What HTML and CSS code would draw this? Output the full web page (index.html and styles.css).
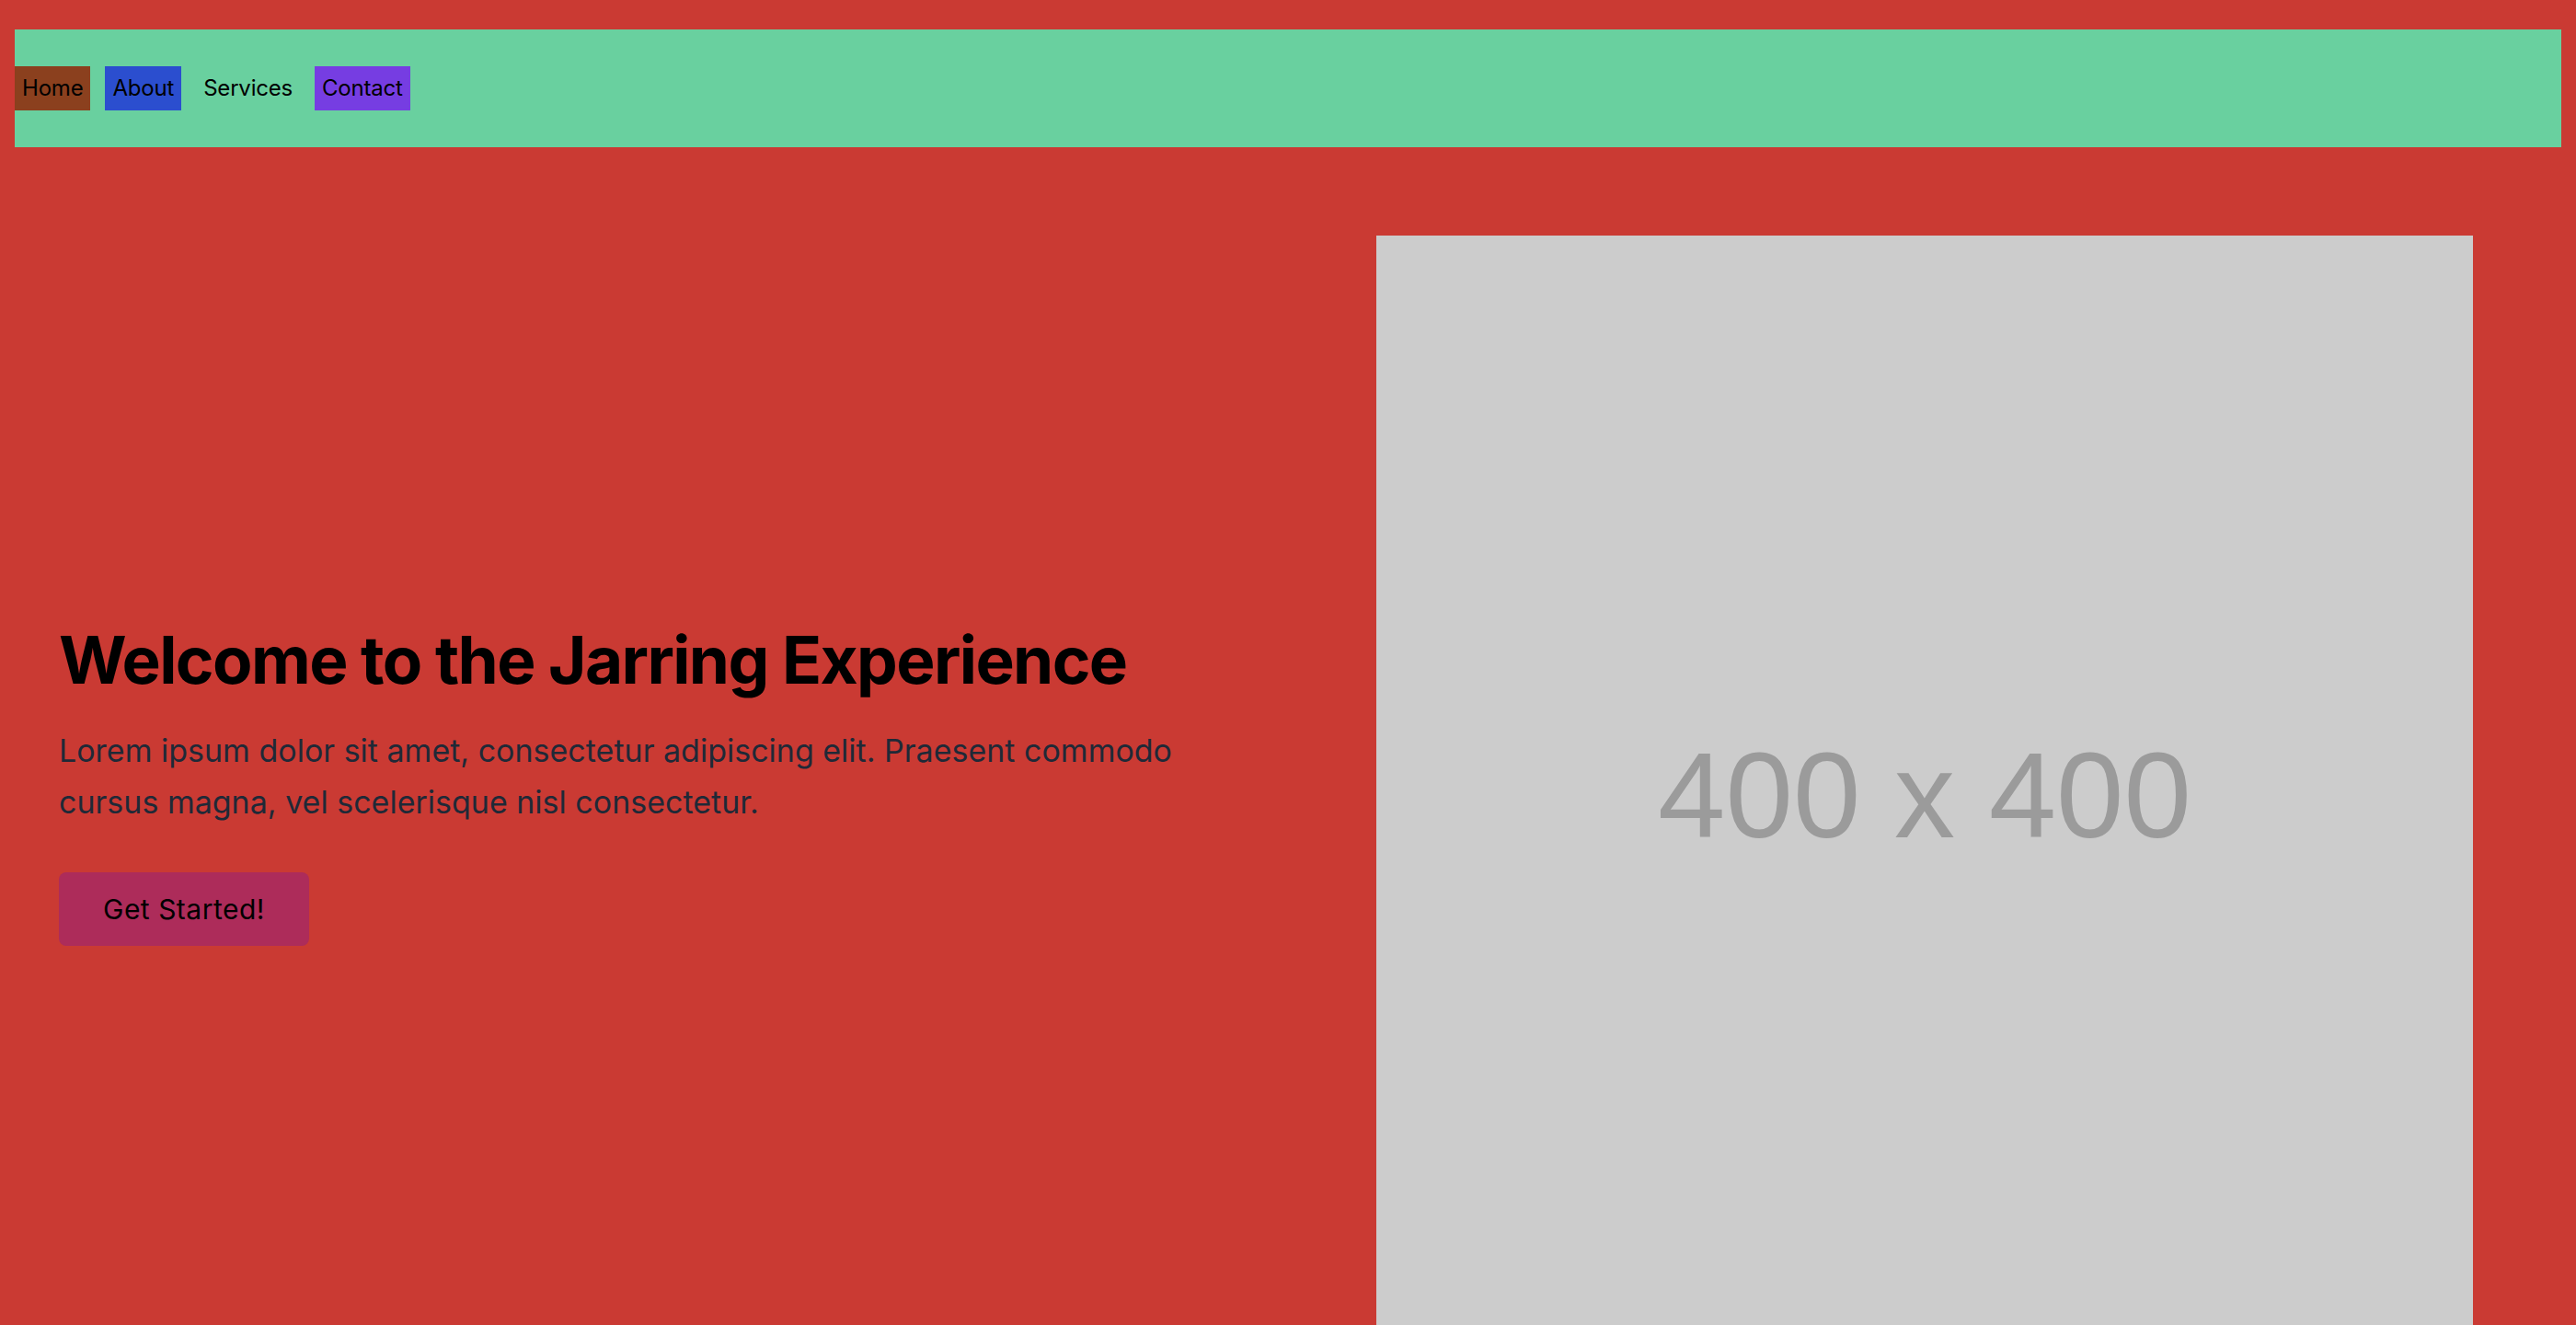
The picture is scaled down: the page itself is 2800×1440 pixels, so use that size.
FILE: index.html
```html
<!DOCTYPE html>
<html lang="en">
<head>
<meta charset="utf-8">
<title>Jarring Experience</title>
<link rel="stylesheet" href="styles.css">
</head>
<body>
<nav class="nav">
  <a class="nav-link nav-home" href="#">Home</a>
  <a class="nav-link nav-about" href="#">About</a>
  <a class="nav-link nav-services" href="#">Services</a>
  <a class="nav-link nav-contact" href="#">Contact</a>
</nav>
<section class="hero">
  <div class="hero-text">
    <h1 class="hero-title">Welcome to the Jarring Experience</h1>
    <p class="hero-lead">Lorem ipsum dolor sit amet, consectetur adipiscing elit. Praesent commodo cursus magna, vel scelerisque nisl consectetur.</p>
    <a class="hero-button" href="#">Get Started!</a>
  </div>
  <div class="hero-image">
    <span class="hero-image-label">400 x 400</span>
  </div>
</section>
</body>
</html>
```

FILE: styles.css
```css
html, body {
  margin: 0;
  padding: 0;
}

body {
  background: #ca3a33;
  padding: 32px 16px 0;
  font-family: Inter, "Noto Sans", sans-serif;
  color: #000;
  overflow: hidden;
  height: 1440px;
  box-sizing: border-box;
}

.nav {
  background: #69d09f;
  height: 128px;
  display: flex;
  align-items: center;
  gap: 16px;
}

.nav-link {
  display: block;
  padding: 0 8px;
  height: 48px;
  line-height: 48px;
  font-size: 24px;
  letter-spacing: -0.2px;
  color: #000;
  text-decoration: none;
}

.nav-home { background: #8b401e; }
.nav-about { background: #2b4ecf; }
.nav-contact { background: #763de2; }

.hero {
  display: flex;
  align-items: center;
  padding: 96px 96px 0 48px;
}

.hero-text {
  flex: 1;
}

.hero-title {
  margin: 0;
  font-size: 71px;
  font-weight: 700;
  line-height: 82px;
  letter-spacing: -1.6px;
}

.hero-lead {
  margin: 30px 0 0;
  max-width: 1260px;
  font-size: 34px;
  line-height: 56px;
  color: #1f2937;
}

.hero-button {
  display: inline-block;
  margin-top: 48px;
  padding: 22px 48px;
  line-height: 36px;
  font-size: 30px;
  letter-spacing: 0.5px;
  background: #ad2c5a;
  color: #000;
  text-decoration: none;
  border-radius: 8px;
}

.hero-image {
  flex: 0 0 1192px;
  height: 1192px;
  background: #cccccc;
  display: flex;
  align-items: center;
  justify-content: center;
}

.hero-image-label {
  font-family: "Liberation Sans", Arial, sans-serif;
  font-size: 132px;
  color: #9b9b9b;
  margin-top: 24px;
  filter: blur(0.6px);
}
```
